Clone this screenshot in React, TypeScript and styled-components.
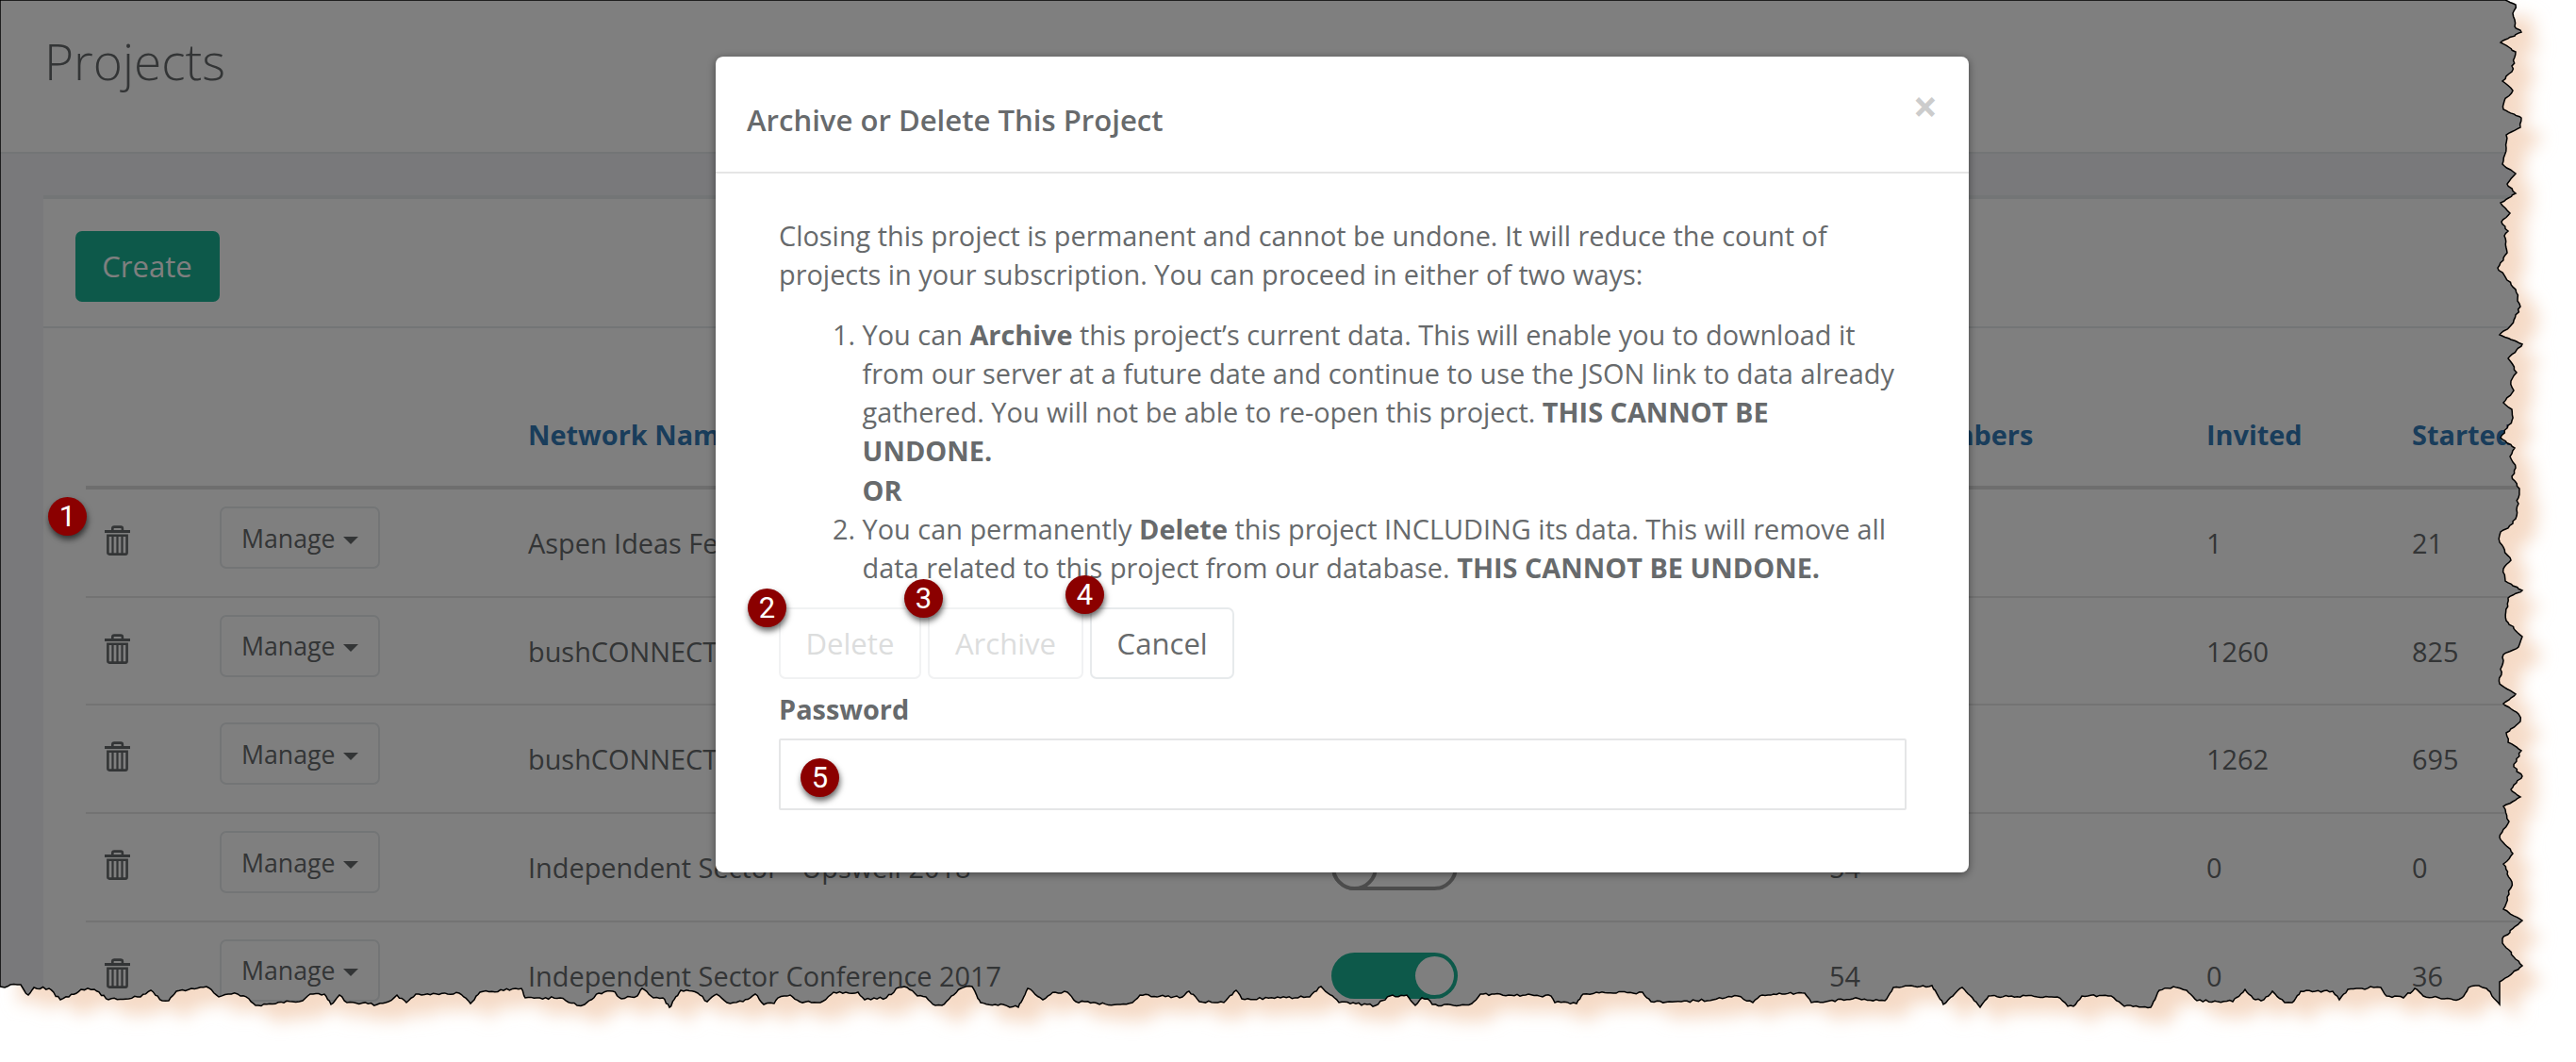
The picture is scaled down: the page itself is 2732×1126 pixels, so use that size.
import React from "react";
import styled, { createGlobalStyle } from "styled-components";

const COLOR = {
  white: "#ffffff",
  page: "#f3f3f6",
  text: "#676a6c",
  line: "#e7eaec",
  rowLine: "#e7e7e7",
  headLine: "#dddddd",
  link: "#337ab7",
  green: "#1ab394",
  badge: "#8b0000",
  glow: "#f5dac6",
};

type Point = [number, number];

// right edge, from top to bottom
const RIGHT_EDGE: Point[] = [
  [2657, 0], [2668, 5], [2665, 14], [2667, 28], [2674, 34], [2652, 45],
  [2668, 55], [2664, 76], [2654, 86], [2665, 96], [2656, 107], [2655, 116],
  [2674, 125], [2673, 135], [2658, 143], [2658, 157], [2654, 174], [2668, 184],
  [2659, 195], [2668, 205], [2652, 215], [2662, 226], [2653, 235], [2660, 245],
  [2656, 250], [2659, 268], [2649, 284], [2668, 307], [2673, 325], [2663, 345],
  [2651, 355], [2675, 365], [2660, 380], [2669, 395], [2663, 404], [2666, 414],
  [2655, 427], [2664, 434], [2664, 446], [2652, 464], [2667, 475], [2662, 484],
  [2668, 496], [2664, 505], [2672, 518], [2668, 550], [2660, 560], [2652, 564],
  [2651, 575], [2663, 594], [2655, 603], [2657, 616], [2675, 626], [2660, 634],
  [2658, 658], [2675, 675], [2671, 686], [2655, 694], [2651, 725], [2668, 736],
  [2655, 746], [2671, 757], [2673, 765], [2658, 777], [2660, 787], [2674, 796],
  [2666, 813], [2675, 823], [2663, 837], [2673, 845], [2655, 855], [2661, 871],
  [2651, 888], [2665, 905], [2655, 916], [2664, 935], [2661, 948], [2655, 964],
  [2675, 976], [2654, 995], [2654, 1000], [2675, 1024], [2651, 1041],
];

// bottom edge, from left to right
const BOTTOM_EDGE: Point[] = [
  [0, 1046], [5, 1047], [11, 1044], [22, 1044], [25, 1049], [30, 1055],
  [36, 1047], [52, 1048], [64, 1060], [73, 1057], [86, 1049], [100, 1049],
  [115, 1060], [149, 1057], [160, 1050], [172, 1061], [179, 1061], [187, 1051],
  [219, 1046], [232, 1057], [242, 1054], [252, 1054], [264, 1059], [271, 1066],
  [310, 1062], [321, 1061], [329, 1054], [344, 1054], [351, 1065], [360, 1055],
  [368, 1063], [400, 1065], [412, 1062], [421, 1055], [431, 1063], [441, 1054],
  [487, 1053], [499, 1064], [509, 1052], [553, 1048], [557, 1058], [594, 1058],
  [612, 1066], [620, 1065], [635, 1053], [650, 1051], [659, 1059], [676, 1056],
  [681, 1048], [693, 1058], [703, 1058], [710, 1068], [722, 1050], [740, 1053],
  [750, 1062], [760, 1054], [771, 1063], [788, 1062], [801, 1054], [810, 1065],
  [821, 1064], [825, 1058], [838, 1055], [848, 1062], [870, 1063], [884, 1052],
  [910, 1052], [917, 1060], [940, 1058], [953, 1047], [962, 1047], [973, 1056],
  [982, 1057], [992, 1066], [999, 1066], [1019, 1048], [1031, 1046], [1040, 1063],
  [1080, 1068], [1090, 1048], [1106, 1060], [1119, 1052], [1132, 1052], [1141, 1062],
  [1185, 1065], [1201, 1063], [1209, 1055], [1254, 1057], [1261, 1051], [1272, 1062],
  [1298, 1063], [1311, 1050], [1317, 1059], [1358, 1058], [1389, 1057], [1401, 1046],
  [1420, 1063], [1459, 1066], [1474, 1056], [1492, 1055], [1501, 1066], [1508, 1058],
  [1514, 1059], [1519, 1065], [1548, 1066], [1561, 1064], [1570, 1054], [1645, 1056],
  [1649, 1063], [1672, 1064], [1679, 1054], [1693, 1052], [1732, 1053], [1742, 1052],
  [1751, 1062], [1783, 1062], [1817, 1060], [1843, 1056], [1859, 1063], [1869, 1055],
  [1914, 1053], [1921, 1063], [1965, 1059], [1999, 1061], [2008, 1047], [2049, 1045],
  [2061, 1065], [2081, 1047], [2100, 1068], [2109, 1056], [2182, 1057], [2193, 1067],
  [2199, 1067], [2208, 1056], [2239, 1056], [2253, 1067], [2281, 1068], [2290, 1050],
  [2305, 1046], [2319, 1050], [2330, 1061], [2368, 1062], [2381, 1049], [2392, 1060],
  [2401, 1060], [2410, 1051], [2423, 1063], [2431, 1063], [2440, 1051], [2474, 1051],
  [2481, 1060], [2490, 1049], [2508, 1049], [2514, 1046], [2525, 1047], [2531, 1056],
  [2549, 1058], [2561, 1048], [2570, 1056], [2602, 1060], [2611, 1058], [2618, 1047],
  [2629, 1045], [2637, 1048], [2651, 1065],
];

// small, repeatable roughness between the main points of the tear
const roughen = (points: Point[], axis: 0 | 1): Point[] => {
  let seed = 7;
  const next = () => {
    seed = (seed * 1103515245 + 12345) % 2147483648;
    return seed / 2147483648 - 0.5;
  };
  const result: Point[] = [];
  points.forEach((point, i) => {
    result.push(point);
    const end = points[i + 1];
    if (!end) return;
    const steps = Math.floor(Math.hypot(end[0] - point[0], end[1] - point[1]) / 3);
    for (let s = 1; s < steps; s++) {
      const t = s / steps;
      const mid: Point = [
        point[0] + (end[0] - point[0]) * t,
        point[1] + (end[1] - point[1]) * t,
      ];
      mid[axis] += next() * 2.6;
      result.push([Math.round(mid[0] * 10) / 10, Math.round(mid[1] * 10) / 10]);
    }
  });
  return result;
};

const OUTLINE: Point[] = [
  [0, 0],
  ...roughen(RIGHT_EDGE, 0),
  ...roughen(BOTTOM_EDGE, 1).reverse(),
];
const CLIP = OUTLINE.map(([x, y]) => `${x}px ${y}px`).join(", ");
const POINTS = OUTLINE.map(([x, y]) => `${x},${y}`).join(" ");

const GlobalStyle = createGlobalStyle`
  * {
    box-sizing: border-box;
  }
  body {
    margin: 0;
    background: ${COLOR.white};
    font-family: "Open Sans", sans-serif;
    font-size: 28.88px;
    line-height: 41.2px;
    color: ${COLOR.text};
  }
`;

const Canvas = styled.div`
  position: relative;
  width: 2732px;
  height: 1126px;
  overflow: hidden;
`;

const TearLayer = styled.svg`
  position: absolute;
  inset: 0;
  pointer-events: none;
`;

const Screen = styled.div`
  position: relative;
  width: 2732px;
  height: 1126px;
  overflow: hidden;
  background: ${COLOR.page};
  clip-path: polygon(${CLIP});
`;

const PageHeader = styled.header`
  height: 163px;
  padding: 28px 47px 0;
  background: ${COLOR.white};
  border-bottom: 2px solid ${COLOR.line};
`;

const PageTitle = styled.h2`
  margin: 0;
  font-size: 53.2px;
  line-height: 73px;
  font-weight: 300;
`;

const Panel = styled.section`
  margin: 44px 0 0 46px;
  background: ${COLOR.white};
  border-top: 4px solid ${COLOR.line};
`;

const PanelHeader = styled.div`
  height: 137px;
  padding: 34px 34px 0;
  border-bottom: 2px solid ${COLOR.line};
`;

const CreateButton = styled.button`
  height: 75px;
  width: 153px;
  padding: 0 1px 2px 0;
  border: 0;
  border-radius: 7px;
  background: ${COLOR.green};
  color: ${COLOR.white};
  font: 400 31.1px "Open Sans", sans-serif;
`;

const Table = styled.div`
  padding-left: 45px;
`;

const Row = styled.div`
  display: grid;
  grid-template-columns: 121.5px 327.5px 852px 528px 400px 218px 1fr;
  align-items: start;
  height: 114.7px;
  padding-left: 20px;
  border-bottom: 2px solid ${COLOR.rowLine};
`;

const HeadRow = styled(Row)`
  height: 171px;
  padding-top: 92px;
  border-bottom: 4px solid ${COLOR.headLine};
  color: ${COLOR.link};
  font-weight: 700;
`;

const Cell = styled.div`
  padding-top: 36px;
  white-space: nowrap;
`;

const HeadCell = styled.div`
  white-space: nowrap;
`;

const TrashIcon = styled.svg`
  display: block;
  margin-top: 38px;
`;

const ManageButton = styled.button`
  display: flex;
  align-items: center;
  gap: 8px;
  width: 170px;
  height: 66px;
  margin-top: 18px;
  padding: 0 0 0 21.5px;
  border: 2px solid ${COLOR.line};
  border-radius: 7px;
  background: ${COLOR.white};
  color: ${COLOR.text};
  font: 400 26.7px "Open Sans", sans-serif;
`;

const Caret = styled.span`
  margin-top: 5px;
  border-top: 8px solid ${COLOR.text};
  border-left: 8px solid transparent;
  border-right: 8px solid transparent;
`;

const Toggle = styled.div<{ $on: boolean }>`
  display: flex;
  justify-content: ${({ $on }) => ($on ? "flex-end" : "flex-start")};
  width: 134px;
  height: 49px;
  margin-top: 32px;
  padding: ${({ $on }) => ($on ? "4px" : "0")};
  border-radius: 25px;
  background: ${({ $on }) => ($on ? COLOR.green : COLOR.white)};
  box-shadow: ${({ $on }) => ($on ? "none" : "inset 0 0 0 4px #999999")};
`;

const Knob = styled.div<{ $on: boolean }>`
  width: ${({ $on }) => ($on ? 41 : 49)}px;
  height: ${({ $on }) => ($on ? 41 : 49)}px;
  border: ${({ $on }) => ($on ? "0" : "4px solid #999999")};
  border-radius: 50%;
  background: ${COLOR.white};
`;

const Backdrop = styled.div`
  position: absolute;
  inset: 0;
  background: rgba(0, 0, 0, 0.5);
`;

const Modal = styled.div`
  width: 1329px;
  height: 865px;
  margin: 60px 0 0 759px;
  border-radius: 8px;
  background: ${COLOR.white};
  box-shadow: 0 2px 8px rgba(0, 0, 0, 0.45);
`;

const ModalHeader = styled.div`
  display: flex;
  justify-content: space-between;
  height: 124px;
  padding: 45px 33px 0;
  border-bottom: 2px solid #e5e5e5;
`;

const ModalTitle = styled.h4`
  margin: 0;
  font-size: 31.1px;
  line-height: 45px;
  font-weight: 600;
`;

const Close = styled.button`
  height: 46px;
  margin-top: -16px;
  padding: 0;
  border: 0;
  background: none;
  color: #cccccc;
  font: 700 46px/46px "Open Sans", sans-serif;
`;

const ModalBody = styled.div`
  padding: 45px 66px 0 67px;
`;

const Paragraph = styled.p`
  margin: 0 0 22.4px;
`;

const Choices = styled.ol`
  margin: 0 0 22px;
  padding-left: 88.6px;
`;

const Actions = styled.div`
  display: flex;
  gap: 7.5px;
`;

const ActionButton = styled.button`
  height: 75.5px;
  padding: 0 26.5px;
  border: 2px solid ${COLOR.line};
  border-radius: 7px;
  background: ${COLOR.white};
  color: ${COLOR.text};
  font: 400 31.1px "Open Sans", sans-serif;

  &:disabled {
    border-color: #f1f2f3;
    color: #dcdddd;
  }
`;

const Label = styled.label`
  display: block;
  margin: 11px 0;
  font-weight: 700;
`;

const PasswordInput = styled.input`
  display: block;
  width: 1196px;
  height: 76px;
  border: 2px solid #e5e6e7;
  border-radius: 2px;
  background: ${COLOR.white};
`;

const Badge = styled.div<{ $x: number; $y: number }>`
  position: absolute;
  left: ${({ $x }) => $x - 20.5}px;
  top: ${({ $y }) => $y - 20.5}px;
  width: 41px;
  height: 41px;
  border-radius: 50%;
  background: ${COLOR.badge};
  box-shadow: 1px 4px 6px rgba(0, 0, 0, 0.6);
  color: ${COLOR.white};
  font: 31px/41px Roboto, sans-serif;
  text-align: center;
`;

type Project = {
  name: string;
  active: boolean;
  members: number;
  invited: number;
  started: number;
};

const PROJECTS: Project[] = [
  { name: "Aspen Ideas Festival", active: true, members: 21, invited: 1, started: 21 },
  { name: "bushCONNECT 2017", active: true, members: 1260, invited: 1260, started: 825 },
  { name: "bushCONNECT 2018", active: true, members: 1262, invited: 1262, started: 695 },
  { name: "Independent Sector - Upswell 2018", active: false, members: 54, invited: 0, started: 0 },
  { name: "Independent Sector Conference 2017", active: true, members: 54, invited: 0, started: 36 },
];

const BADGES: Point[] = [
  [71.5, 547.5],
  [813.5, 644.5],
  [979.5, 634.5],
  [1150.5, 630.5],
  [869.5, 824.5],
];

const Trash: React.FC = () => (
  <TrashIcon width="28" height="33" viewBox="0 0 28 33" fill="none" stroke={COLOR.text}>
    <path d="M0 6.5H27" strokeWidth="3" />
    <path d="M8.3 6V3.5Q8.3 1.6 10.2 1.6H17Q18.9 1.6 18.9 3.5V6" strokeWidth="2.6" />
    <path d="M3.4 10.8H23.6V29Q23.6 30.6 22 30.6H5Q3.4 30.6 3.4 29Z" strokeWidth="2.6" />
    <path d="M8.5 11V30M13.5 11V30M18.5 11V30" strokeWidth="2.2" />
  </TrashIcon>
);

const ProjectRow: React.FC<Project> = (props) => (
  <Row>
    <Trash />
    <ManageButton>
      Manage
      <Caret />
    </ManageButton>
    <Cell>{props.name}</Cell>
    <Toggle $on={props.active}>
      <Knob $on={props.active} />
    </Toggle>
    <Cell>{props.members}</Cell>
    <Cell>{props.invited}</Cell>
    <Cell>{props.started}</Cell>
  </Row>
);

const DeleteDialog: React.FC = () => (
  <Modal>
    <ModalHeader>
      <ModalTitle>Archive or Delete This Project</ModalTitle>
      <Close>×</Close>
    </ModalHeader>
    <ModalBody>
      <Paragraph>
        Closing this project is permanent and cannot be undone. It will reduce the count of
        <br />
        projects in your subscription. You can proceed in either of two ways:
      </Paragraph>
      <Choices>
        <li>
          You can <b>Archive</b> this project’s current data. This will enable you to download it
          <br />
          from our server at a future date and continue to use the JSON link to data already
          <br />
          gathered. You will not be able to re-open this project. <b>THIS CANNOT BE</b>
          <br />
          <b>UNDONE.</b>
          <br />
          <b>OR</b>
        </li>
        <li>
          You can permanently <b>Delete</b> this project INCLUDING its data. This will remove all
          <br />
          data related to this project from our database. <b>THIS CANNOT BE UNDONE.</b>
        </li>
      </Choices>
      <Actions>
        <ActionButton disabled>Delete</ActionButton>
        <ActionButton disabled>Archive</ActionButton>
        <ActionButton>Cancel</ActionButton>
      </Actions>
      <Label htmlFor="password">Password</Label>
      <PasswordInput id="password" type="password" />
    </ModalBody>
  </Modal>
);

const App: React.FC = () => {
  return (
    <>
      <GlobalStyle />
      <Canvas>
        <TearLayer width="2732" height="1126">
          <defs>
            <filter id="glow" x="-5%" y="-5%" width="110%" height="110%">
              <feGaussianBlur stdDeviation="9" />
            </filter>
          </defs>
          <polygon
            points={POINTS}
            fill={COLOR.glow}
            filter="url(#glow)"
            transform="translate(20 17)"
          />
        </TearLayer>
        <Screen>
          <PageHeader>
            <PageTitle>Projects</PageTitle>
          </PageHeader>
          <Panel>
            <PanelHeader>
              <CreateButton>Create</CreateButton>
            </PanelHeader>
            <Table>
              <HeadRow>
                <span />
                <span />
                <HeadCell>Network Name</HeadCell>
                <HeadCell>Active</HeadCell>
                <HeadCell>Total Members</HeadCell>
                <HeadCell>Invited</HeadCell>
                <HeadCell>Started</HeadCell>
              </HeadRow>
              {PROJECTS.map((project) => (
                <ProjectRow key={project.name} {...project} />
              ))}
            </Table>
          </Panel>
          <Backdrop>
            <DeleteDialog />
          </Backdrop>
        </Screen>
        <TearLayer width="2732" height="1126">
          <polygon points={POINTS} fill="none" stroke="#000000" strokeWidth="1.5" />
        </TearLayer>
        {BADGES.map(([x, y], i) => (
          <Badge key={i} $x={x} $y={y}>
            {i + 1}
          </Badge>
        ))}
      </Canvas>
    </>
  );
};

export default App;
